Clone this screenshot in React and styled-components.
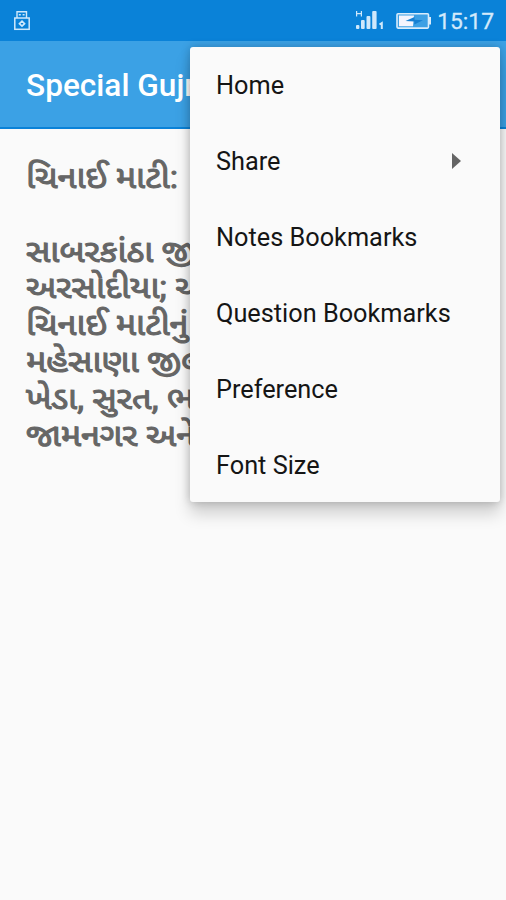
import React from "react";
import styled, { createGlobalStyle } from "styled-components";

const GlobalStyle = createGlobalStyle`
    * {
        box-sizing: border-box;
    }
    body {
        margin: 0;
        background: #fafafa;
        font-family: Roboto, "Noto Sans", "Noto Sans Gujarati", sans-serif;
    }
`;

const menuItems = [
    { label: "Home" },
    { label: "Share", submenu: true },
    { label: "Notes Bookmarks" },
    { label: "Question Bookmarks" },
    { label: "Preference" },
    { label: "Font Size" },
];

const lines = [
    "સાબરકાંઠા જી",
    "અરસોદીયા; ચ",
    "ચિનાઈ માટીનું",
    "મહેસાણા જીલ",
    "ખેડા, સુરત, ભ",
    "જામનગર અને",
];

const UsbIcon = () => (
    <svg width="18" height="21" viewBox="0 0 18 21" fill="none" stroke="#cfe8fb">
        <path d="M4 8V1.7h9.5V8" strokeWidth="1.4" />
        <path d="M5.8 4.7h2M9.6 4.7h2" strokeWidth="1.6" />
        <rect x="1.8" y="8" width="14.4" height="11.3" strokeWidth="1.5" />
        <path d="M9 11.2l2.6 2.5L9 16.2l-2.6-2.5z" strokeWidth="1.6" />
    </svg>
);

const SignalIcon = () => (
    <svg width="30" height="21" viewBox="0 0 30 21" fill="#cfe8fb">
        <path d="M1.6 1v5.4M6.4 1v5.4M1.6 3.7h4.8" stroke="#cfe8fb" strokeWidth="1.2" />
        <rect x="1" y="15" width="3.4" height="4" rx="1" />
        <rect x="6" y="10" width="3.7" height="9" rx="1" />
        <rect x="11.5" y="6" width="3.9" height="13" rx="1" />
        <rect x="17.2" y="1" width="4.4" height="18" rx="1" />
        <path d="M24.5 14.5l2.3-1.5v6" fill="none" stroke="#cfe8fb" strokeWidth="2" />
    </svg>
);

const BatteryIcon = () => (
    <svg width="36" height="18" viewBox="0 0 36 18">
        <rect x="1" y="1.7" width="31.5" height="14.4" rx="1" fill="#3da0e4" stroke="#d9ecfb" strokeWidth="1.6" />
        <rect x="33" y="5" width="2" height="7.5" fill="#d9ecfb" />
        <path d="M3 3.5h15l-1 10.8H3z" fill="#f4f4fd" />
        <path d="M9.5 9l9-4v2.7l8.5.6-8.8 4.3.2-3z" fill="#1680d3" />
    </svg>
);

const Arrow = () => (
    <svg width="9" height="16" viewBox="0 0 9 16">
        <path d="M0 0l9 8-9 8z" fill="#656565" />
    </svg>
);

const App = () => {
    return (
        <Screen>
            <GlobalStyle />
            <StatusBar>
                <UsbIcon />
                <StatusRight>
                    <SignalIcon />
                    <BatteryIcon />
                    <Clock>15:17</Clock>
                </StatusRight>
            </StatusBar>
            <Toolbar>
                <Title>Special Gujr</Title>
            </Toolbar>
            <Content>
                <Line>ચિનાઈ માટી:</Line>
                <Line />
                {lines.map((line) => (
                    <Line key={line}>{line}</Line>
                ))}
            </Content>
            <Menu>
                {menuItems.map(({ label, submenu }) => (
                    <MenuItem key={label}>
                        {label}
                        {submenu && <Arrow />}
                    </MenuItem>
                ))}
            </Menu>
        </Screen>
    );
};

const Screen = styled.div`
    position: relative;
    width: 100%;
    height: 900px;
    overflow: hidden;
    background: #fafafa;
`;

const StatusBar = styled.div`
    display: flex;
    align-items: center;
    justify-content: space-between;
    height: 41px;
    padding: 1px 12px 0 13px;
    background: #0a82d8;

    > svg {
        margin-bottom: 1px;
    }
`;

const StatusRight = styled.div`
    display: flex;
    align-items: center;

    svg:first-child {
        margin: 0 11px 1px 0;
    }
`;

const Clock = styled.span`
    margin-left: 5px;
    color: #d3eafb;
    font-size: 22.8px;
    font-weight: 400;
    line-height: 26px;
    padding-top: 1px;
    -webkit-text-stroke: 0.3px #d3eafb;
`;

const Toolbar = styled.header`
    display: flex;
    align-items: center;
    height: 88px;
    padding: 2px 26px 0;
    background: #3ba1e5;
    border-bottom: 2px solid #0a82d8;
`;

const Title = styled.h1`
    margin: 0;
    color: white;
    font-size: 31.6px;
    font-weight: 500;
    white-space: nowrap;
`;

const Content = styled.main`
    padding: 31px 26px;
    color: #666;
    font-size: 31.6px;
    font-weight: 400;
    -webkit-text-stroke: 1.1px #666;
`;

/* the Gujarati face runs narrow, so each line is widened a little */
const Line = styled.p`
    height: 36.8px;
    margin: 0;
    line-height: 36.8px;
    white-space: nowrap;
    transform: scaleX(1.085);
    transform-origin: left;
`;

const Menu = styled.nav`
    position: absolute;
    top: 47px;
    right: 6px;
    width: 310px;
    height: 455px;
    padding-top: 1px;
    background: #fafafa;
    border-radius: 3px;
    box-shadow: 0 12px 16px rgba(0, 0, 0, 0.17), 0 0 10px rgba(0, 0, 0, 0.22);
`;

const MenuItem = styled.div`
    display: flex;
    align-items: center;
    justify-content: space-between;
    height: 75.9px;
    padding: 0 39px 0 26px;
    color: #151515;
    font-size: 25.3px;

    svg {
        margin-top: -2px;
    }
`;

export default App;
